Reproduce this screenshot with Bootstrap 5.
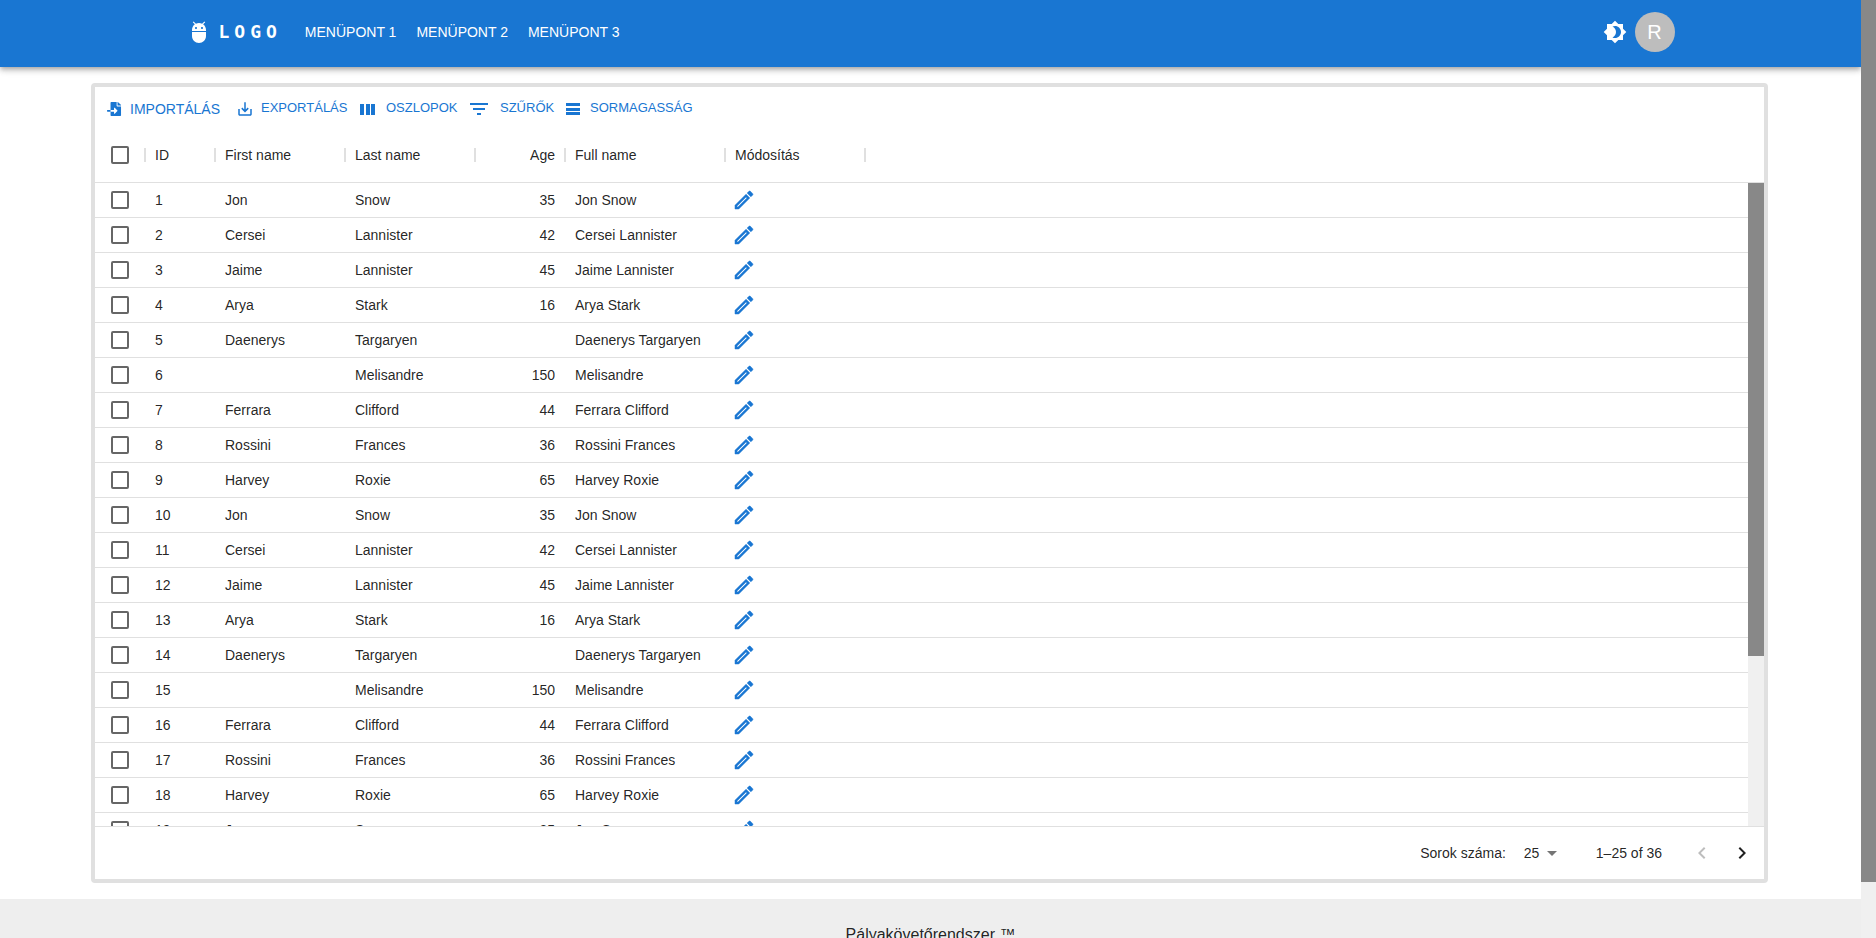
<!DOCTYPE html>
<html lang="hu">
<head>
<meta charset="utf-8">
<meta name="viewport" content="width=device-width, initial-scale=1">
<title>Pályakövetőrendszer</title>
<link href="https://cdn.jsdelivr.net/npm/bootstrap@5.3.0/dist/css/bootstrap.min.css" rel="stylesheet">
<style>
  :root { --brand: #1976d2; --line: #e0e0e0; --ink: rgba(0, 0, 0, .87); }
  body { font-family: "Liberation Sans", Arial, sans-serif; font-size: 14px; line-height: 20px; color: var(--ink); background: #fff; }
  svg { fill: currentColor; flex: none; display: block; }

  .app-bar { background: var(--brand); padding-bottom: 3px; position: relative;
    box-shadow: 0 2px 4px -1px rgba(0,0,0,.2), 0 4px 5px 0 rgba(0,0,0,.14), 0 1px 10px 0 rgba(0,0,0,.12); }
  .app-bar .bar-inner { max-width: 1536px; height: 64px; }
  .logo-text { font: 700 18px/24px "DejaVu Sans Mono", monospace; letter-spacing: 5px; }
  .bar-links { gap: 20px; margin-left: 23px; }
  .avatar { width: 40px; height: 40px; background: #bdbdbd; font-size: 20px; }

  .page-body { padding: 16px 93px 16px 91px; }
  .data-panel { height: calc(100vh - 138px); border: 4px solid var(--line); border-radius: 4px; }
  .tool-row { display: grid; grid-template-columns: 131px 125px 110px 94px auto; justify-content: start; height: 40px; padding: 2px 9px 0; align-items: center; }
  .tool-row button, .plain-btn { border: 0; background: none; padding: 0; color: var(--brand); text-align: left; white-space: nowrap; }
  .tool-row button { display: flex; align-items: center; gap: 6px; font-size: 13px; }
  .tool-row svg { margin-top: 2px; }
  .tool-row .import-btn { font-size: 14px; padding-top: 2px; }
  .tool-row .import-btn svg { margin-top: 0; }

  .grid-table { table-layout: fixed; width: 100%; border-collapse: separate; border-spacing: 0; }
  .grid-table th, .grid-table td { padding: 0 10px; font-weight: 400; border-bottom: 1px solid var(--line); white-space: nowrap; }
  .grid-table th { height: 56px; position: relative; }
  .grid-table td { height: 35px; }
  .grid-table th.has-sep::after { content: ""; position: absolute; right: -1px; top: 21px; width: 2px; height: 14px; background: var(--line); z-index: 1; }
  .grid-table .edit-cell { padding: 0 7px; }
  .edit-cell svg { stroke: currentColor; stroke-width: .5; }
  .row-check { appearance: none; display: block; width: 18px; height: 18px; margin: 0 auto; border: 2px solid #666; border-radius: 2px; background: #fff; }
  .row-check:checked { background: var(--brand); border-color: var(--brand); }

  .track { background: #f0f0f0; }
  .thumb { background: #888; }
  .grid-track { position: absolute; top: 56px; right: 0; bottom: 0; width: 16px; }
  .grid-track .thumb { height: 73.5%; }
  .page-track { width: 15px; }
  .page-track .thumb { height: 94%; }

  .grid-foot { height: 53px; border-top: 1px solid var(--line); padding-right: 2px; }
  .page-size { margin-left: 18px; }
  .page-size select { appearance: none; border: 0; background: none; padding: 0 24px 0 0; color: inherit; font: inherit; }
  .page-size svg { position: absolute; right: 0; top: -2px; pointer-events: none; color: #757575; }
  .page-range { margin: 0 20px 0 32px; }
  .pager { width: 40px; height: 40px; color: var(--ink); }
  .pager:disabled { color: rgba(0, 0, 0, .26); }
  .site-foot { background: #eee; padding: 24px 0; font-size: 16px; line-height: 24px; }
</style>
</head>
<body>
<div class="d-flex vh-100 overflow-hidden">
  <div class="flex-grow-1 overflow-hidden">
    <header class="app-bar text-white">
      <div class="bar-inner container-fluid px-4 d-flex align-items-center">
        <a href="#" class="d-flex align-items-center gap-2 text-white text-decoration-none">
          <svg width="24" height="24" viewBox="0 0 24 24" aria-hidden="true"><path d="M5 16c0 3.87 3.13 7 7 7s7-3.13 7-7v-4H5v4zM16.12 4.37l2.1-2.1-.82-.83-2.3 2.31C14.16 3.28 13.12 3 12 3s-2.16.28-3.09.75L6.6 1.44l-.82.83 2.1 2.1C6.14 5.64 5 7.68 5 10v1h14v-1c0-2.32-1.14-4.36-2.88-5.63zM9 9c-.55 0-1-.45-1-1s.45-1 1-1 1 .45 1 1-.45 1-1 1zm6 0c-.55 0-1-.45-1-1s.45-1 1-1 1 .45 1 1-.45 1-1 1z"/></svg>
          <span class="logo-text">LOGO</span>
        </a>
        <nav class="bar-links d-flex">
          <a href="#" class="text-white text-decoration-none">MENÜPONT 1</a>
          <a href="#" class="text-white text-decoration-none">MENÜPONT 2</a>
          <a href="#" class="text-white text-decoration-none">MENÜPONT 3</a>
        </nav>
        <div class="d-flex align-items-center gap-2 ms-auto">
          <button type="button" class="plain-btn text-white" aria-label="Téma">
            <svg width="24" height="24" viewBox="0 0 24 24"><path d="M20 8.69V4h-4.69L12 .69 8.69 4H4v4.69L.69 12 4 15.31V20h4.69L12 23.31 15.31 20H20v-4.69L23.31 12 20 8.69zM12 18c-.89 0-1.74-.2-2.5-.55C11.56 16.5 13 14.42 13 12s-1.44-4.5-3.5-5.45C10.26 6.2 11.11 6 12 6c3.31 0 6 2.69 6 6s-2.69 6-6 6z"/></svg>
          </button>
          <button type="button" class="avatar rounded-circle border-0 p-0 text-white">R</button>
        </div>
      </div>
    </header>

    <main class="page-body">
      <section class="data-panel d-flex flex-column">
        <div class="tool-row flex-shrink-0">
          <button type="button" class="import-btn"><svg width="20" height="14" viewBox="-110 0 730 512"><path d="M16 288c-8.800 0-16 7.200-16 16v32c0 8.800 7.200 16 16 16h112v-64zm489-183L407.100 7c-4.500-4.500-10.600-7-17-7H384v128h128v-6.100c0-6.300-2.500-12.400-7-16.900zm-153 31V0H152c-13.300 0-24 10.700-24 24v264h128v-65.200c0-14.300 17.300-21.400 27.400-11.300L379 308c6.600 6.700 6.600 17.400 0 24l-95.700 96.400c-10.100 10.100-27.400 3-27.400-11.300V352H128v136c0 13.300 10.700 24 24 24h336c13.300 0 24-10.700 24-24V160H376c-13.200 0-24-10.800-24-24z"/></svg>IMPORTÁLÁS</button>
          <button type="button"><svg width="20" height="18" viewBox="0 0 24 24"><path d="M19 12v7H5v-7H3v7c0 1.100.9 2 2 2h14c1.100 0 2-.9 2-2v-7h-2zm-6 .67l2.590-2.580L17 11.500l-5 5-5-5 1.410-1.410L11 12.670V3h2z"/></svg>EXPORTÁLÁS</button>
          <button type="button"><svg width="20" height="20" viewBox="0 0 20 20"><path d="M0 5h4v11H0zM6 5h4v11H6zM11 5h4v11h-4z"/></svg>OSZLOPOK</button>
          <button type="button"><svg width="24" height="20" viewBox="0 0 24 20"><path d="M0 4h18v2H0zM3 9h12v2H3zM7 14h4v2H7z"/></svg>SZŰRŐK</button>
          <button type="button"><svg width="20" height="20" viewBox="0 0 20 20"><path d="M2 4h14v3H2zM2 9h14v3H2zM2 13h14v3H2z"/></svg>SORMAGASSÁG</button>
        </div>

        <div class="flex-grow-1 overflow-hidden position-relative">
          <table class="grid-table">
            <colgroup>
              <col style="width:50px"><col style="width:70px"><col style="width:130px"><col style="width:130px"><col style="width:90px"><col style="width:160px"><col style="width:140px"><col>
            </colgroup>
            <thead>
              <tr>
                <th class="has-sep"><input type="checkbox" class="row-check" aria-label="Összes kijelölése"></th>
                <th class="has-sep">ID</th>
                <th class="has-sep">First name</th>
                <th class="has-sep">Last name</th>
                <th class="has-sep text-end">Age</th>
                <th class="has-sep">Full name</th>
                <th class="has-sep">Módosítás</th>
                <th></th>
              </tr>
            </thead>
            <tbody id="rows"></tbody>
          </table>
          <div class="grid-track track"><div class="thumb"></div></div>
        </div>

        <div class="grid-foot flex-shrink-0 d-flex align-items-center justify-content-end">
          <label for="pageSize">Sorok száma:</label>
          <div class="page-size position-relative">
            <select id="pageSize"><option>25</option></select>
            <svg width="24" height="24" viewBox="0 0 24 24"><path d="M7 10l5 5 5-5z"/></svg>
          </div>
          <span class="page-range">1–25 of 36</span>
          <button type="button" class="plain-btn pager d-flex align-items-center justify-content-center" disabled aria-label="Előző oldal">
            <svg width="24" height="24" viewBox="0 0 24 24"><path d="M15.410 7.410L14 6l-6 6 6 6 1.410-1.410L10.830 12z"/></svg>
          </button>
          <button type="button" class="plain-btn pager d-flex align-items-center justify-content-center" aria-label="Következő oldal">
            <svg width="24" height="24" viewBox="0 0 24 24"><path d="M10 6L8.590 7.410 13.170 12l-4.580 4.590L10 18l6-6z"/></svg>
          </button>
        </div>
      </section>
    </main>

    <footer class="site-foot text-center">Pályakövetőrendszer ™</footer>
  </div>
  <div class="page-track track flex-shrink-0"><div class="thumb"></div></div>
</div>

<script>
  const people = [
    ['Jon', 'Snow', 35], ['Cersei', 'Lannister', 42], ['Jaime', 'Lannister', 45],
    ['Arya', 'Stark', 16], ['Daenerys', 'Targaryen', ''], ['', 'Melisandre', 150],
    ['Ferrara', 'Clifford', 44], ['Rossini', 'Frances', 36], ['Harvey', 'Roxie', 65]
  ];
  const pencil = '<svg width="24" height="24" viewBox="0 0 24 24"><path d="M14.06 9.02l.92.92L5.92 19H5v-.92l9.06-9.06M17.66 3c-.25 0-.51.1-.7.29l-1.83 1.83 3.75 3.75 1.83-1.83c.39-.39.39-1.02 0-1.41l-2.34-2.34c-.2-.2-.45-.29-.71-.29zm-3.6 3.19L3 17.25V21h3.75L17.81 9.94l-3.75-3.75z"/></svg>';
  let html = '';
  for (let id = 1; id <= 19; id++) {
    const [first, last, age] = people[(id - 1) % people.length];
    html += `<tr><td><input type="checkbox" class="row-check" aria-label="${id}. sor"></td><td>${id}</td><td>${first}</td><td>${last}</td><td class="text-end">${age}</td><td>${(first + ' ' + last).trim()}</td><td class="edit-cell"><button type="button" class="plain-btn d-block" aria-label="Módosítás">${pencil}</button></td><td></td></tr>`;
  }
  document.getElementById('rows').innerHTML = html;
</script>
<script src="https://cdn.jsdelivr.net/npm/bootstrap@5.3.0/dist/js/bootstrap.bundle.min.js"></script>
</body>
</html>
